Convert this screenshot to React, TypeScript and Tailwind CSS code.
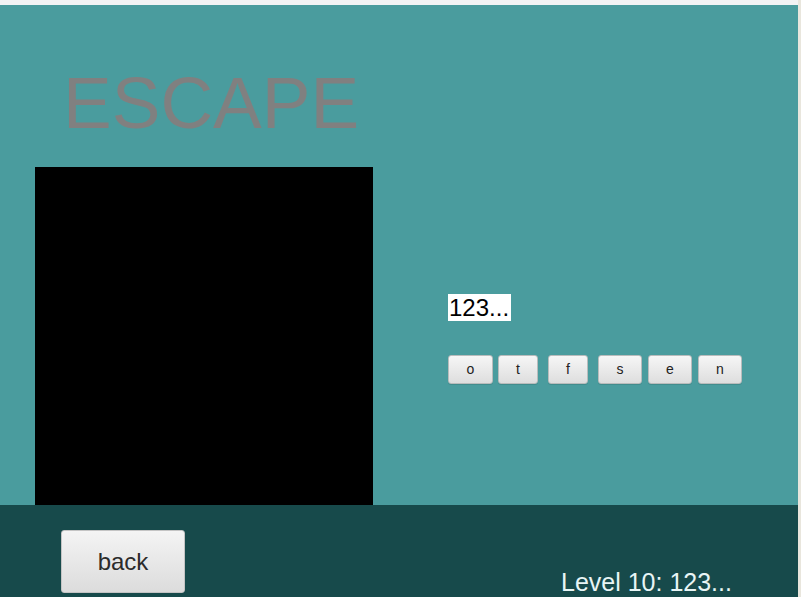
import React from "react";

const letters: { l: string; w: string }[] = [
  { l: "o", w: "w-[45px]" },
  { l: "t", w: "w-[40px]" },
  { l: "f", w: "w-[40px]" },
  { l: "s", w: "w-[44px]" },
  { l: "e", w: "w-[44px]" },
  { l: "n", w: "w-[44px]" },
];

export default function App() {
  return (
    <div
      className="w-[801px] h-[597px] overflow-hidden flex flex-row bg-[#f2f3f4]"
      style={{ fontFamily: '"Liberation Sans", Arial, sans-serif' }}
    >
      <div className="w-[798px] h-full flex flex-col">
        <div className="h-[5px] shrink-0 bg-[#f2f3f4]" />
        <div className="h-[500px] shrink-0 bg-[#4a9c9e] flex flex-row">
          <div className="ml-[35px] w-[338px] flex flex-col">
            <div className="mt-[61px] ml-[28px] h-[73px] text-[73px] leading-none text-[#808080] whitespace-nowrap">
              ESCAPE
            </div>
            <div className="mt-[28px] w-[338px] h-[338px] bg-black" />
          </div>
          <div className="ml-[75px] flex flex-col">
            <div className="mt-[289px] w-[63px] h-[27px] bg-white text-black text-[24px] leading-[28px] pl-[1px]">
              123...
            </div>
            <div className="mt-[34px] flex flex-row">
              {letters.map((b) => (
                <div key={b.l} className="w-[50px]">
                  <button
                    className={`${b.w} h-[29px] rounded-[3px] border border-[#b9bcbc] bg-gradient-to-b from-[#f6f6f6] to-[#dedede] text-[14px] text-[#222] flex items-center justify-center shadow-[0_1px_0_rgba(0,0,0,0.1)]`}
                  >
                    {b.l}
                  </button>
                </div>
              ))}
            </div>
          </div>
        </div>
        <div className="flex-1 bg-[#174a4b] flex flex-row">
          <div className="ml-[61px] mt-[25px]">
            <button className="w-[124px] h-[63px] rounded-[3px] border border-[#c4c4c4] bg-gradient-to-b from-[#f4f4f4] to-[#dcdcdc] text-[24px] text-[#2b2b2b] flex items-center justify-center">
              back
            </button>
          </div>
          <div className="ml-[376px] mt-[62px] text-[25px] leading-[30px] text-[#e8f5f5] whitespace-nowrap">
            Level 10: 123...
          </div>
        </div>
      </div>
      <div className="w-[3px] h-full bg-[#e9e6dd]" />
    </div>
  );
}
